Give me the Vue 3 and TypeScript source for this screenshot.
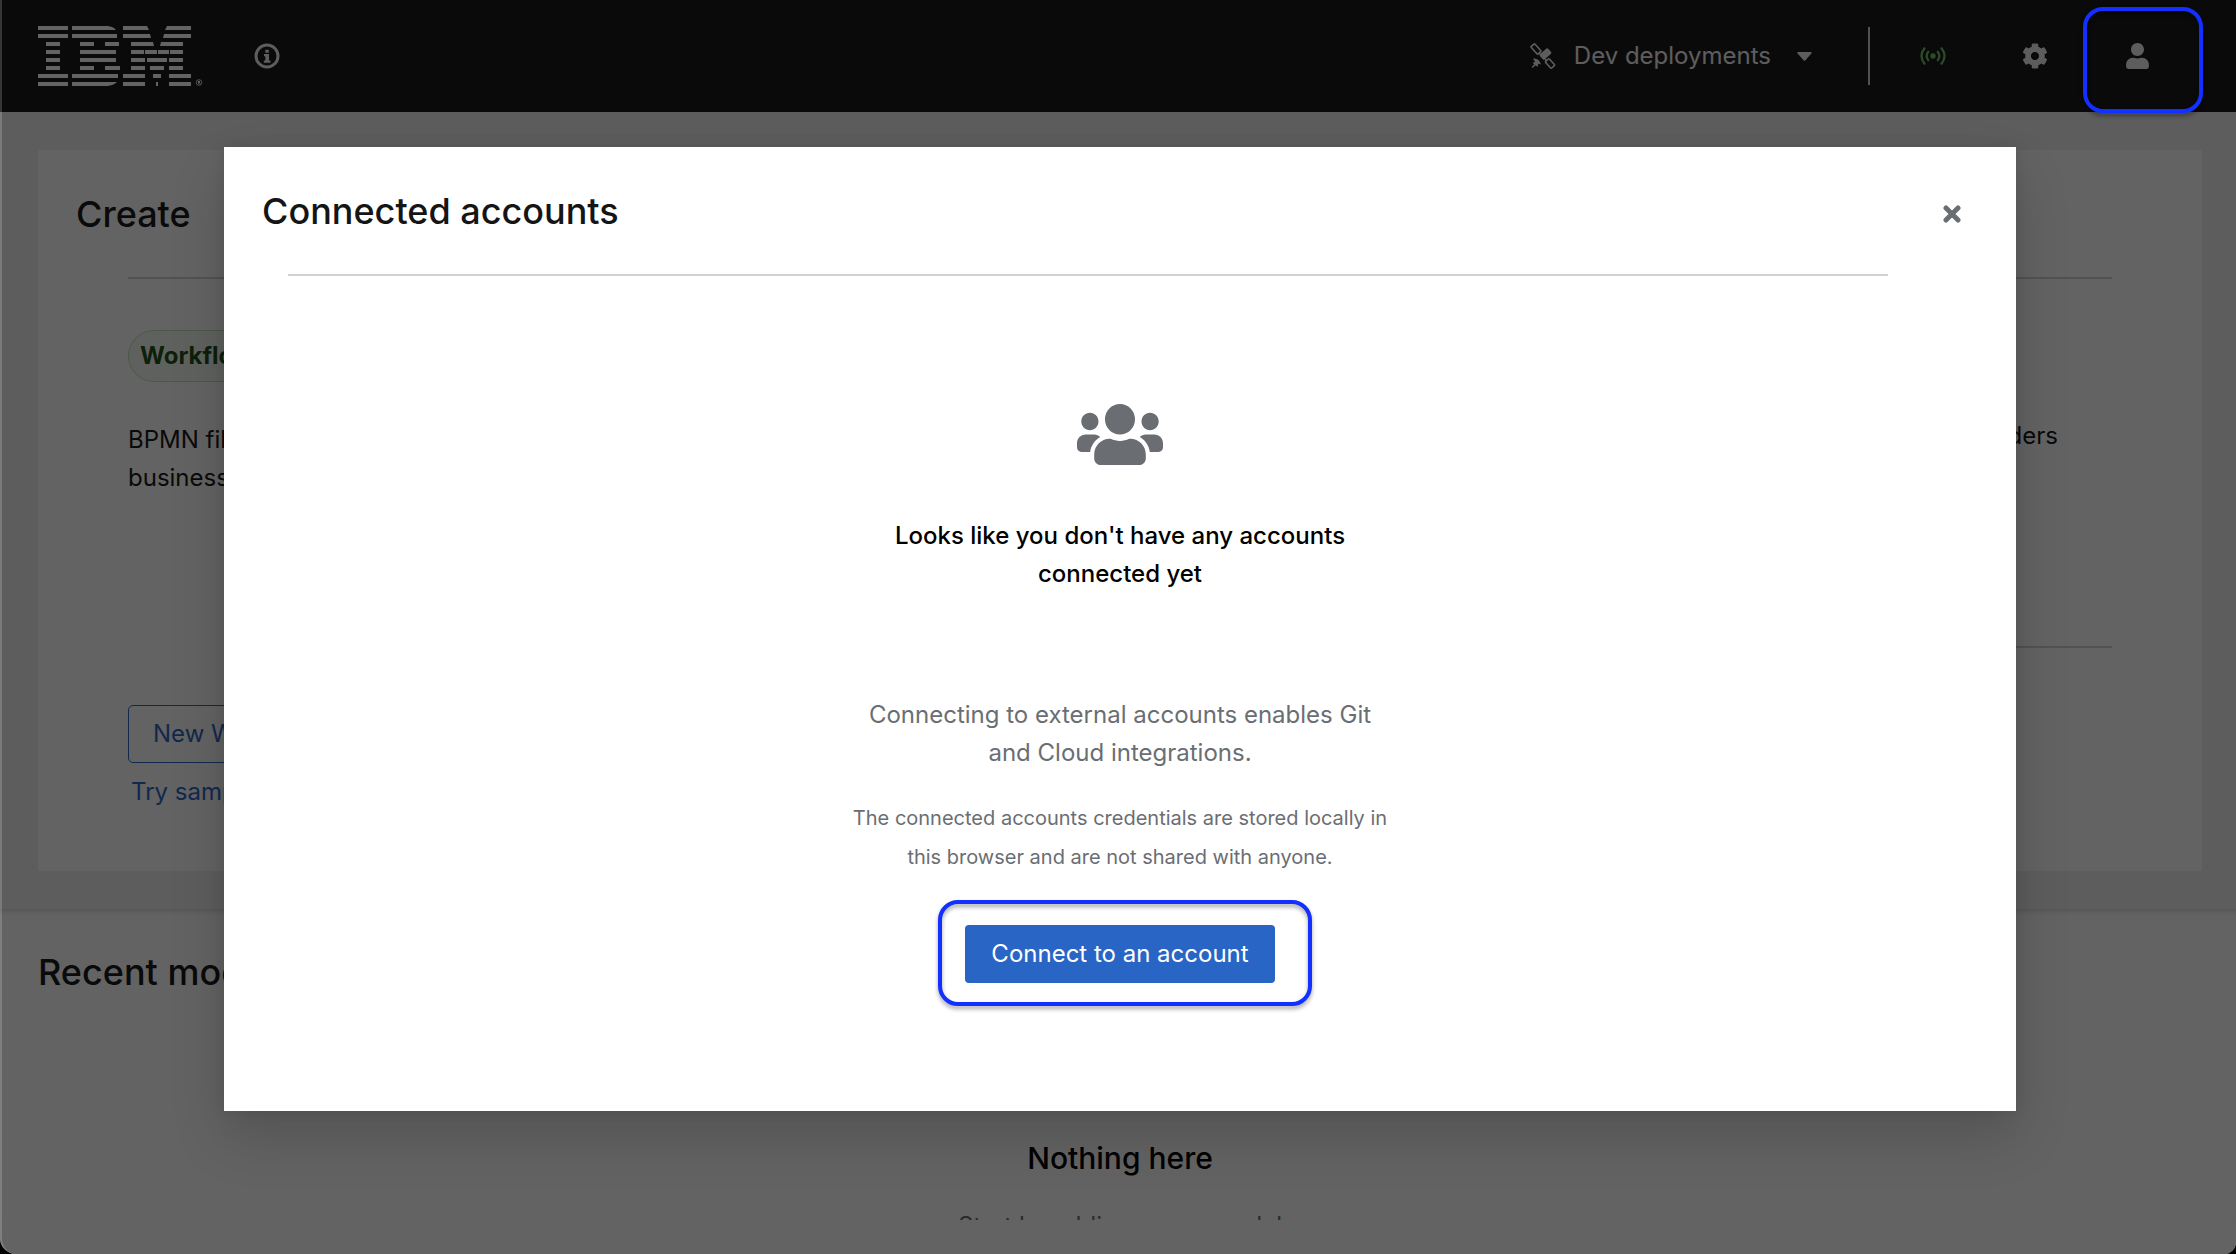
<script setup lang="ts">
import { ref } from 'vue'

interface Bar { x: number; y: number; w: number }

const BAR_HEIGHT = 4

// Horizontal stripes of the logo, eight rows at a pitch of eight pixels
const rows: [number, number][][] = [
  [[0, 30], [34, 36], [85, 24], [129, 24]],
  [[0, 30], [34, 45], [85, 27], [126, 27]],
  [[8, 14], [42, 14], [67, 14], [93, 22], [123, 22]],
  [[8, 14], [42, 36], [93, 13], [107, 12], [120, 11], [132, 13]],
  [[8, 14], [42, 36], [93, 14], [109, 20], [131, 14]],
  [[8, 14], [42, 14], [67, 15], [93, 14], [112, 14], [131, 14]],
  [[0, 30], [34, 46], [85, 22], [115, 8], [131, 22]],
  [[0, 30], [34, 36], [85, 22], [118, 2], [131, 22]],
]

const bars: Bar[] = rows.flatMap((row, i) => row.map(([x, w]) => ({ x, y: i * 8, w })))

const modalOpen = ref(true)
</script>

<template>
  <div class="window">
    <header class="masthead">
      <svg class="logo" viewBox="0 0 165 60" role="img" aria-label="IBM">
        <rect v-for="b in bars" :key="`${b.x}-${b.y}`" :x="b.x" :y="b.y" :width="b.w" :height="BAR_HEIGHT" />
        <path d="M68 0q7 0 10 4H68zM68 60q7 0 11-4H68zM109 0l2 4h-2zM129 0l-2 4h2zM112 8l1 4h-1zM126 8l-1 4h1zM115 16l1 4h-1zM123 16l-1 4h1z" />
        <circle cx="161" cy="56.500" r="2.800" fill="none" stroke="#fff" stroke-width=".8" />
        <path d="M160 55h2v1.500h-2zM160 55h.8v3H160zM161.200 56.500h.8l.5 1.500h-.8z" />
      </svg>
      <button class="plain info" aria-label="About">
        <svg width="26" height="26" viewBox="0 0 26 26">
          <circle cx="13" cy="13" r="11" fill="none" stroke="currentColor" stroke-width="3" />
          <path d="M11.300 6.800h3.500v3h-3.500zM10 11h5v6.500h1.500v2.200H9.800v-2.200h1.500v-4.300H10z" fill="currentColor" />
        </svg>
      </button>

      <div class="tools">
        <button class="plain deployments">
          <svg width="26" height="26" viewBox="0 0 26 26">
            <g fill="none" stroke="currentColor" stroke-width="1.600">
              <rect x="1" y="3.500" width="10" height="5" rx=".8" transform="rotate(48 6 6)" />
              <rect x="15.500" y="18" width="9" height="5" rx=".8" transform="rotate(48 20 20.500)" />
              <path d="M9 10l3 3M15 16l2 2" />
            </g>
            <rect x="10" y="7.500" width="11" height="7" rx="1.500" transform="rotate(-42 15.500 11)" fill="currentColor" />
            <path d="M3 15.500q6-1 8 6l-2.800-.8-.6 3.300-1.900-1.700L2.500 25l-.8-.9 2.600-2.800-1.800-1.500 2.700-.9z" fill="currentColor" />
          </svg>
          <span>Dev deployments</span>
          <svg class="caret" width="15" height="9" viewBox="0 0 15 9">
            <path d="M1 0h13q1.200.6.4 1.600L8.200 8.400q-.7.600-1.400 0L.6 1.600Q-.2.600 1 0z" fill="currentColor" />
          </svg>
        </button>
        <span class="rule"></span>
        <button class="plain tool online" aria-label="Extended services">
          <svg width="26" height="18" viewBox="0 0 26 18">
            <g fill="none" stroke="currentColor" stroke-width="2.200" stroke-linecap="round">
              <path d="M4.500 1.300q-6 7.700 0 15.400M21.500 1.300q6 7.700 0 15.400" />
              <path d="M8.300 4.800q-3.400 4.200 0 8.400M17.700 4.800q3.400 4.200 0 8.400" />
            </g>
            <circle cx="13" cy="9" r="2.700" fill="currentColor" />
          </svg>
        </button>
        <button class="plain tool" aria-label="Settings">
          <svg width="26" height="26" viewBox="0 0 512 512">
            <path fill="currentColor" d="M487.4 315.7l-42.6-24.600c4.300-23.200 4.300-47 0-70.200l42.600-24.600c4.900-2.800 7.100-8.600 5.500-14-11.100-35.600-30-67.800-54.700-94.600-3.800-4.100-10-5.100-14.800-2.300L380.800 110c-17.900-15.400-38.500-27.300-60.800-35.100V25.800c0-5.600-3.900-10.500-9.400-11.700-36.700-8.200-74.300-7.800-109.200 0-5.500 1.200-9.400 6.100-9.400 11.700V75c-22.200 7.900-42.800 19.800-60.800 35.100L88.700 85.500c-4.900-2.800-11-1.900-14.800 2.300-24.700 26.700-43.600 58.900-54.700 94.600-1.700 5.400.6 11.200 5.500 14L67.300 221c-4.300 23.200-4.300 47 0 70.200l-42.600 24.600c-4.900 2.800-7.100 8.600-5.500 14 11.100 35.600 30 67.800 54.700 94.600 3.800 4.100 10 5.100 14.800 2.300l42.600-24.600c17.900 15.400 38.500 27.300 60.800 35.100v49.200c0 5.600 3.900 10.500 9.400 11.700 36.700 8.200 74.300 7.800 109.200 0 5.500-1.200 9.400-6.100 9.400-11.700v-49.200c22.200-7.900 42.800-19.800 60.800-35.100l42.600 24.600c4.900 2.800 11 1.900 14.800-2.300 24.700-26.700 43.600-58.900 54.700-94.600 1.500-5.500-.7-11.300-5.600-14.100zM256 336c-44.100 0-80-35.900-80-80s35.900-80 80-80 80 35.900 80 80-35.900 80-80 80z" />
          </svg>
        </button>
        <button class="plain tool" aria-label="Accounts">
          <svg width="23" height="26" viewBox="0 0 448 512">
            <path fill="currentColor" d="M224 256c70.700 0 128-57.300 128-128S294.700 0 224 0 96 57.300 96 128s57.300 128 128 128zm89.600 32h-16.700c-22.200 10.200-46.900 16-72.900 16s-50.600-5.800-72.900-16h-16.700C60.200 288 0 348.200 0 422.400V464c0 26.500 21.500 48 48 48h352c26.500 0 48-21.500 48-48v-41.600c0-74.200-60.200-134.400-134.400-134.400z" />
          </svg>
        </button>
      </div>
    </header>

    <main class="page">
      <section class="start">
        <div class="card">
          <div class="create">
            <h1>Create</h1>
            <hr />
            <div class="create-body">
              <span class="label">Workflow</span>
              <p>BPMN files are used to generate<br />business workflows.</p>
              <div class="actions">
                <button class="outline">New Workflow</button>
                <a href="#">Try sample</a>
              </div>
            </div>
          </div>
          <div class="import">
            <hr />
            <p>Drag &amp; drop files and folders</p>
            <hr />
          </div>
        </div>
      </section>
      <section class="recent">
        <h1>Recent models</h1>
        <div class="nothing">
          <h2>Nothing here</h2>
          <p>Start by adding a new model</p>
        </div>
      </section>
    </main>

    <div v-if="modalOpen" class="backdrop">
      <div class="modal" role="dialog" aria-modal="true" aria-labelledby="modal-title">
        <div class="modal-head">
          <h1 id="modal-title">Connected accounts</h1>
          <button class="plain close" aria-label="Close" @click="modalOpen = false">
            <svg width="18" height="18" viewBox="0 0 18 18">
              <path d="M3 3l12 12M15 3L3 15" stroke="currentColor" stroke-width="5" stroke-linecap="round" />
            </svg>
          </button>
        </div>
        <hr class="modal-rule" />
        <div class="empty">
          <svg class="users" width="86" height="61" viewBox="0 32 640 448" preserveAspectRatio="none">
            <path fill="currentColor" d="M96 224c35.300 0 64-28.700 64-64s-28.700-64-64-64-64 28.700-64 64 28.700 64 64 64zm448 0c35.300 0 64-28.700 64-64s-28.700-64-64-64-64 28.700-64 64 28.700 64 64 64zm32 32h-64c-17.600 0-33.500 7.100-45.100 18.600 40.300 22.100 68.900 62 75.100 109.400h66c17.700 0 32-14.300 32-32v-32c0-35.300-28.700-64-64-64zm-256 0c61.900 0 112-50.100 112-112S381.900 32 320 32 208 82.100 208 144s50.100 112 112 112zm76.800 32h-8.300c-20.800 10-43.900 16-68.500 16s-47.600-6-68.500-16h-8.300C179.600 288 128 339.600 128 403.200V432c0 26.500 21.500 48 48 48h288c26.500 0 48-21.500 48-48v-28.800c0-63.600-51.600-115.200-115.200-115.200zm-223.700-13.400C161.500 263.100 145.600 256 128 256H64c-35.300 0-64 28.700-64 64v32c0 17.700 14.300 32 32 32h65.900c6.300-47.400 34.900-87.300 75.200-109.400z" />
          </svg>
          <h2>Looks like you don't have any accounts connected yet</h2>
          <p class="lead">Connecting to external accounts enables Git and Cloud integrations.</p>
          <p class="note">The connected accounts credentials are stored locally in this browser and are not shared with anyone.</p>
          <div class="connect">
            <button class="primary">Connect to an account</button>
            <span class="ring ring-connect"></span>
          </div>
        </div>
      </div>
    </div>
    <span class="ring ring-user"></span>
  </div>
</template>

<style>
body {
  margin: 0;
  background: #000;
}
</style>

<style scoped>
.window {
  position: relative;
  display: flex;
  flex-direction: column;
  height: 100vh;
  box-sizing: border-box;
  padding-bottom: 34px;
  overflow: hidden;
  border-radius: 0 0 12px 16px;
  background: #fff;
  color: #151515;
  font: 400 24px/38px Inter, Roboto, sans-serif;
}
.window::after {
  content: '';
  position: absolute;
  inset: 0;
  border-left: 2px solid rgba(255, 255, 255, 0.18);
  border-radius: inherit;
  pointer-events: none;
}
h1, h2, p { margin: 0; }
h1 {
  font-size: 36px;
  line-height: 46px;
  font-weight: 500;
}
hr {
  height: 2px;
  margin: 0;
  border: 0;
  background: #d2d2d2;
}
button {
  font: inherit;
  cursor: pointer;
}
.plain {
  display: flex;
  align-items: center;
  padding: 0;
  border: 0;
  background: none;
  color: inherit;
}

.masthead {
  display: flex;
  align-items: center;
  flex: none;
  height: 112px;
  box-sizing: border-box;
  padding: 0 48px 0 38px;
  background: #151515;
  color: #f0f0f0;
}
.logo {
  width: 165px;
  height: 60px;
  fill: #fff;
}
.info { margin-left: 51px; }
.tools {
  display: flex;
  align-items: center;
  margin-left: auto;
}
.deployments span { margin: 0 26px 0 18px; }
.rule {
  width: 2px;
  height: 58px;
  margin: 0 12px 0 56px;
  background: #d2d2d2;
}
.tool {
  justify-content: center;
  width: 102px;
  height: 58px;
}
.online { color: #6ec664; }

.page {
  flex: 1;
  min-height: 0;
  overflow: hidden;
}
.start {
  padding: 38px 34px 38px 38px;
  background: #f0f0f0;
}
.card {
  display: grid;
  grid-template-columns: 1fr 1fr;
  min-height: 721px;
  background: #fff;
}
.create {
  display: flex;
  flex-direction: column;
  padding-top: 41px;
}
.create h1 { padding-left: 38px; }
.create hr { margin: 40px 90px 0; }
.create-body {
  display: flex;
  flex: 1;
  flex-direction: column;
  align-items: flex-start;
  padding: 51px 90px 60px;
}
.label {
  padding: 6px 11px;
  margin-bottom: 39px;
  border: 1px solid #bde5b8;
  border-radius: 26px;
  background: #f3faf2;
  color: #1e4f18;
  font-weight: 700;
}
.actions {
  display: flex;
  flex-direction: column;
  align-items: flex-start;
  gap: 10px;
  margin-top: auto;
}
.outline {
  padding: 9px 24px;
  border: 1px solid #2b66c6;
  border-radius: 5px;
  background: none;
  color: #2b66c6;
}
.actions a {
  padding-left: 3px;
  color: #2b66c6;
  text-decoration: none;
}
.import { padding: 127px 90px 0; }
.import p {
  margin: 138px 54px 191px 0;
  text-align: right;
}
.recent {
  padding: 40px 34px 0 38px;
  box-shadow: inset 0 6px 6px -4px rgba(3, 3, 3, 0.16);
}
.nothing {
  margin-top: 143px;
  text-align: center;
}
.nothing h2 {
  margin-bottom: 29px;
  color: #000;
  font-size: 30px;
  line-height: 40px;
  font-weight: 500;
}
.nothing p { color: #6a6e73; }

.backdrop {
  position: absolute;
  inset: 0;
  display: flex;
  align-items: center;
  justify-content: center;
  padding: 4px 0 0 4px;
  background: rgba(3, 3, 3, 0.62);
}
.modal {
  width: calc(100% - 64px);
  max-width: 1792px;
  background: #fff;
  box-shadow: 0 26px 51px rgba(3, 3, 3, 0.16), 0 0 13px rgba(3, 3, 3, 0.1);
}
.modal-head {
  display: flex;
  align-items: flex-end;
  justify-content: space-between;
  padding: 41px 55px 0 38px;
}
.close {
  padding-bottom: 11px;
  color: #6a6e73;
}
.modal-rule { margin: 40px 128px 0 64px; }
.empty {
  display: flex;
  flex-direction: column;
  align-items: center;
  max-width: 544px;
  margin: 0 auto;
  padding: 128px 0;
  color: #6a6e73;
  text-align: center;
}
.empty h2 {
  margin: 52px 0 103px;
  color: #000;
  font-size: 24px;
  line-height: 38px;
  font-weight: 500;
}
.note {
  margin: 27px 0 48px;
  font-size: 20px;
  line-height: 39px;
}
.connect { position: relative; }
.primary {
  padding: 10px 26px;
  border: 0;
  border-radius: 4px;
  background: #2965c5;
  color: #fff;
}
.ring {
  position: absolute;
  box-sizing: border-box;
  border: 4px solid #1230ff;
  border-radius: 20px;
  filter: drop-shadow(0 3px 2px rgba(0, 0, 0, 0.35));
  pointer-events: none;
}
.ring-connect { inset: -25px -37px -23px -27px; }
.ring-user {
  top: 7px;
  right: 33px;
  width: 120px;
  height: 106px;
}
</style>
